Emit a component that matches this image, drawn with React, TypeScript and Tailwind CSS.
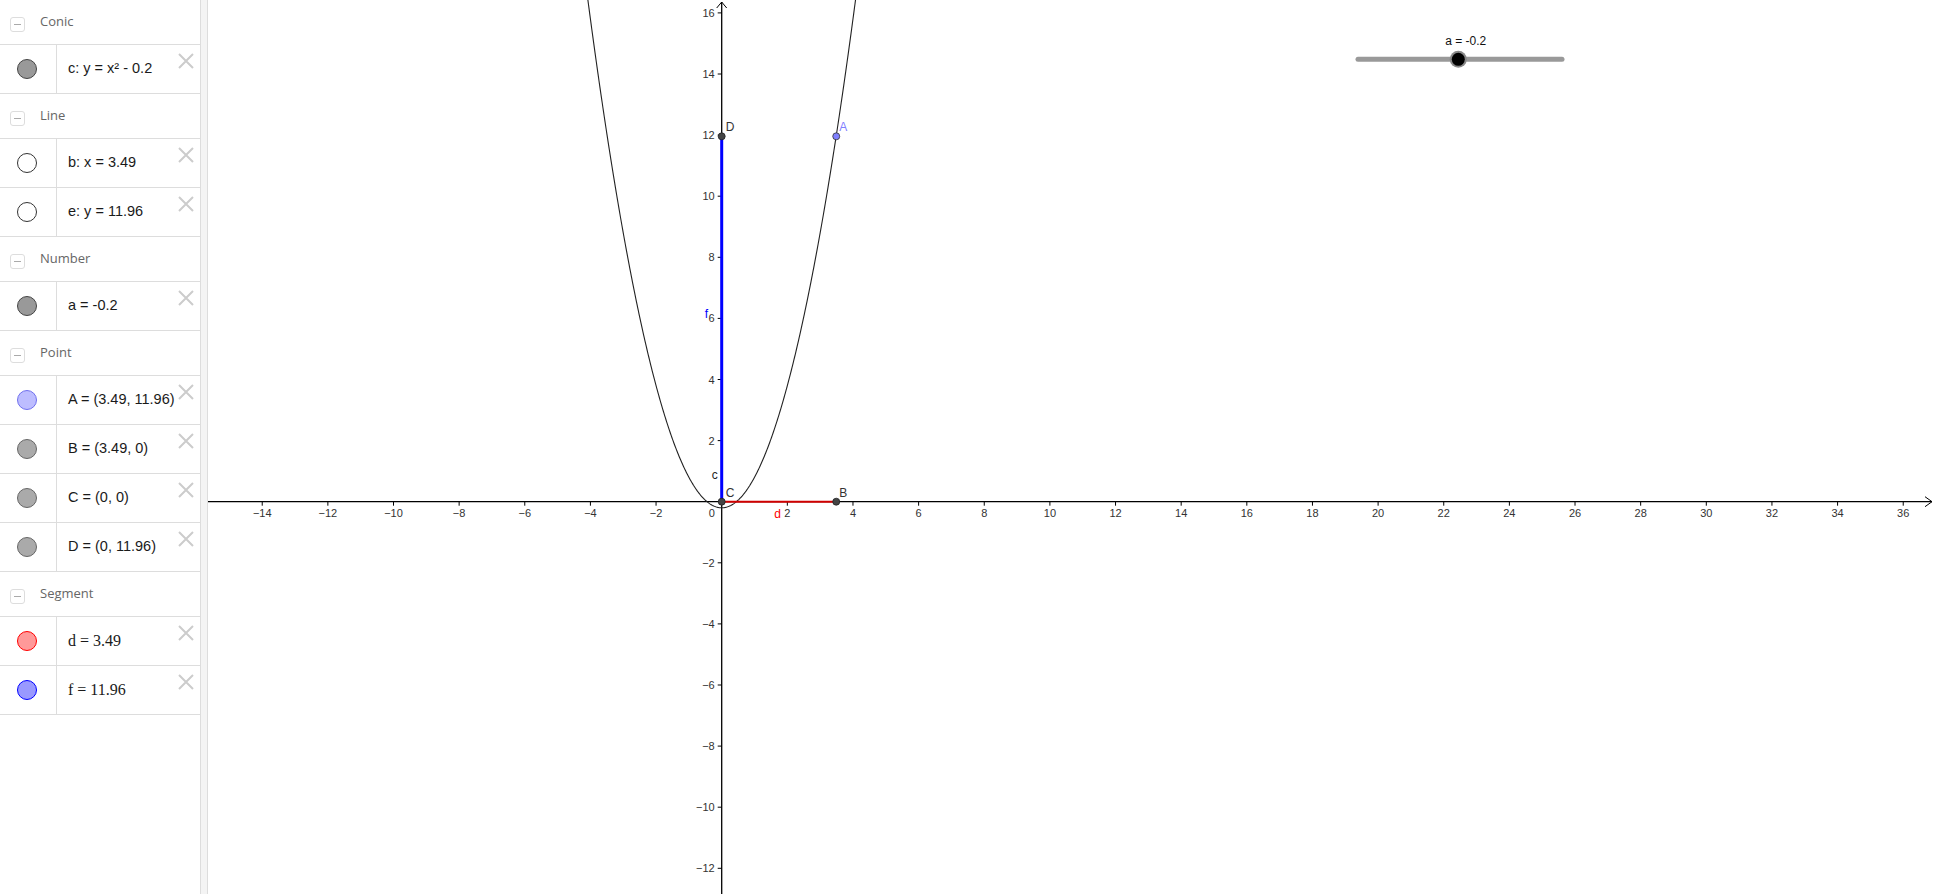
import React from "react";

const GX = 208;
const OX = 721.7 - GX;
const OY = 501.7;
const SX = 32.82;
const SY = 30.55;
const W = 1936 - GX;
const H = 894;

const px = (x: number) => OX + x * SX;
const py = (y: number) => OY - y * SY;

type Item = { text: string; fill: string; stroke: string; serif?: boolean };
type Group = { title: string; items: Item[] };

const groups: Group[] = [
  { title: "Conic", items: [{ text: "c: y = x² - 0.2", fill: "#999999", stroke: "#444444" }] },
  {
    title: "Line",
    items: [
      { text: "b: x = 3.49", fill: "#ffffff", stroke: "#333333" },
      { text: "e: y = 11.96", fill: "#ffffff", stroke: "#333333" },
    ],
  },
  { title: "Number", items: [{ text: "a = -0.2", fill: "#999999", stroke: "#444444" }] },
  {
    title: "Point",
    items: [
      { text: "A = (3.49, 11.96)", fill: "#bdbdff", stroke: "#7070ee" },
      { text: "B = (3.49, 0)", fill: "#aaaaaa", stroke: "#666666" },
      { text: "C = (0, 0)", fill: "#aaaaaa", stroke: "#666666" },
      { text: "D = (0, 11.96)", fill: "#aaaaaa", stroke: "#666666" },
    ],
  },
  {
    title: "Segment",
    items: [
      { text: "d = 3.49", fill: "#ff9999", stroke: "#ff0000", serif: true },
      { text: "f = 11.96", fill: "#9999ff", stroke: "#0000ff", serif: true },
    ],
  },
];

function Header({ title }: { title: string }) {
  return (
    <div className="flex h-[45px] items-center border-b border-[#dddddd]">
      <div className="ml-[10px] mt-[4px] flex h-[15px] w-[15px] items-center justify-center rounded-[3px] border border-[#dddddd]">
        <div className="h-[1px] w-[7px] bg-[#aaaaaa]" />
      </div>
      <span className="ml-[15px] text-[13px] text-[#666666] [font-family:'Open_Sans','Liberation_Sans',sans-serif]">
        {title}
      </span>
    </div>
  );
}

function Row({ item }: { item: Item }) {
  return (
    <div className="relative flex h-[49px] border-b border-[#dddddd]">
      <div className="flex w-[57px] shrink-0 items-center justify-center border-r border-[#dddddd]">
        <div
          className="ml-[-2px] h-[20px] w-[20px] rounded-full border"
          style={{ backgroundColor: item.fill, borderColor: item.stroke }}
        />
      </div>
      <div
        className={
          item.serif
            ? "flex items-center pl-[11px] text-[16px] text-[#1a1a1a] [font-family:'Liberation_Serif',serif]"
            : "flex items-center pl-[11px] text-[14.5px] text-[#1a1a1a] [font-family:'Liberation_Sans',sans-serif]"
        }
      >
        {item.text}
      </div>
      <svg className="absolute right-[6px] top-[8px]" width="16" height="16" viewBox="0 0 16 16">
        <path d="M1 1 L15 15 M15 1 L1 15" stroke="#cccccc" strokeWidth="2" />
      </svg>
    </div>
  );
}

function Graphics() {
  const xs: number[] = [];
  for (let v = -14; v <= 36; v += 2) if (v !== 0) xs.push(v);
  const ys: number[] = [];
  for (let v = -12; v <= 16; v += 2) if (v !== 0) ys.push(v);

  let d = "";
  for (let i = 0; i <= 420; i++) {
    const x = -4.2 + i * 0.02;
    const y = x * x - 0.2;
    d += (i === 0 ? "M" : "L") + px(x).toFixed(2) + " " + py(y).toFixed(2) + " ";
  }

  const font = "'Liberation Sans', Arial, sans-serif";

  return (
    <svg width={W} height={H} className="block" style={{ fontFamily: font }}>
      <line x1={0} y1={OY} x2={W - 4} y2={OY} stroke="#000" strokeWidth={1.3} />
      <path d={`M${W - 11} ${OY - 5} L${W - 4} ${OY} L${W - 11} ${OY + 5}`} fill="none" stroke="#000" strokeWidth={1} />
      <line x1={OX} y1={2} x2={OX} y2={H} stroke="#000" strokeWidth={1.3} />
      <path d={`M${OX - 5} 8 L${OX} 2 L${OX + 5} 8`} fill="none" stroke="#000" strokeWidth={1} />
      {xs.map((v) => (
        <g key={"x" + v}>
          <line x1={px(v)} y1={OY} x2={px(v)} y2={OY + 4} stroke="#000" strokeWidth={1} />
          <text x={px(v)} y={OY + 15} fontSize={11} fill="#333" textAnchor="middle">
            {v < 0 ? "\u2212" + -v : String(v)}
          </text>
        </g>
      ))}
      {ys.map((v) => (
        <g key={"y" + v}>
          <line x1={OX - 4} y1={py(v)} x2={OX} y2={py(v)} stroke="#000" strokeWidth={1} />
          <text x={OX - 7} y={py(v) + 4} fontSize={11} fill="#333" textAnchor="end">
            {v < 0 ? "\u2212" + -v : String(v)}
          </text>
        </g>
      ))}
      <text x={OX - 10} y={OY + 15} fontSize={11} fill="#333" textAnchor="middle">
        0
      </text>

      <path d={d} fill="none" stroke="#222" strokeWidth={1.1} />

      <line x1={px(0)} y1={py(0)} x2={px(0)} y2={py(11.96)} stroke="#0000ff" strokeWidth={3} />
      <line x1={px(0)} y1={py(0)} x2={px(3.49)} y2={py(0)} stroke="#d00000" strokeWidth={2} />

      <text x={OX - 10} y={OY - 23} fontSize={12} fill="#222">c</text>
      <text x={OX - 17} y={318} fontSize={12} fill="#0000ff">f</text>
      <text x={px(1.6)} y={OY + 16} fontSize={12} fill="#ff0000">d</text>
      <text x={OX + 4} y={OY - 5} fontSize={12} fill="#333">C</text>
      <text x={px(3.49) + 3} y={OY - 5} fontSize={12} fill="#333">B</text>
      <text x={OX + 4} y={py(11.96) - 5} fontSize={12} fill="#333">D</text>
      <text x={px(3.49) + 3} y={py(11.96) - 5} fontSize={12} fill="#7f7fff">A</text>

      <circle cx={px(0)} cy={py(0)} r={3.5} fill="#444" stroke="#222" strokeWidth={0.8} />
      <circle cx={px(3.49)} cy={py(0)} r={3.5} fill="#444" stroke="#222" strokeWidth={0.8} />
      <circle cx={px(0)} cy={py(11.96)} r={3.5} fill="#444" stroke="#222" strokeWidth={0.8} />
      <circle cx={px(3.49)} cy={py(11.96)} r={3.5} fill="#7f7fff" stroke="#333" strokeWidth={0.8} />

      <text x={1465.7 - GX} y={45} fontSize={12} fill="#111" textAnchor="middle">
        a = -0.2
      </text>
      <line x1={1358 - GX} y1={59.3} x2={1562 - GX} y2={59.3} stroke="#999" strokeWidth={5} strokeLinecap="round" />
      <circle cx={1458.3 - GX} cy={59.3} r={8.5} fill="#888" />
      <circle cx={1458.3 - GX} cy={59.3} r={6.5} fill="#000" />
    </svg>
  );
}

export default function App() {
  return (
    <div className="flex h-[894px] w-[1936px] overflow-hidden bg-white">
      <div className="w-[201px] shrink-0 border-r border-[#dddddd] bg-white">
        {groups.map((g) => (
          <div key={g.title}>
            <Header title={g.title} />
            {g.items.map((it) => (
              <Row key={it.text} item={it} />
            ))}
          </div>
        ))}
      </div>
      <div className="w-[7px] shrink-0 border-r border-[#dddddd] bg-[#f4f4f4]" />
      <div className="relative flex-1">
        <Graphics />
      </div>
    </div>
  );
}
